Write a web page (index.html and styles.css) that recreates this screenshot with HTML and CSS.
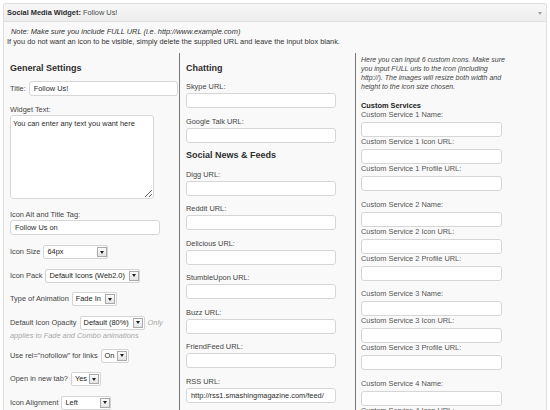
FILE: index.html
```html
<!DOCTYPE html>
<html lang="en">
<head>
<meta charset="utf-8">
<title>Social Media Widget</title>
<link rel="stylesheet" href="styles.css">
</head>
<body>
<div class="widget">
  <div class="widget-top">
    <h4 class="widget-title"><strong>Social Media Widget:</strong> Follow Us!</h4>
    <span class="widget-toggle"></span>
  </div>
  <div class="widget-inside">
    <div class="note">
      <p class="note-em"><em>Note: Make sure you include FULL URL (i.e. http://www.example.com)</em></p>
      <p>If you do not want an icon to be visible, simply delete the supplied URL and leave the input blox blank.</p>
    </div>
    <div class="columns">
      <div class="col col-general">
        <h3 class="col-title">General Settings</h3>
        <div class="row-title"><label class="row-title-label">Title:</label><input class="text text-fill" type="text" value="Follow Us!"></div>
        <label class="lbl lbl-widget-text">Widget Text:</label>
        <textarea class="textarea">You can enter any text you want here</textarea>
        <label class="lbl lbl-alt">Icon Alt and Title Tag:</label>
        <input class="text text-alt" type="text" value="Follow Us on">
        <div class="opt opt-first">Icon Size<span class="select w-size"><span class="select-val">64px</span><span class="select-btn"></span></span></div>
        <div class="opt">Icon Pack<span class="select w-pack"><span class="select-val">Default Icons (Web2.0)</span><span class="select-btn"></span></span></div>
        <div class="opt">Type of Animation<span class="select w-anim"><span class="select-val">Fade In</span><span class="select-btn"></span></span></div>
        <div class="opt opt-wrap">Default Icon Opacity<span class="select w-opacity"><span class="select-val">Default (80%)</span><span class="select-btn"></span></span><span class="hint">Only</span><span class="hint hint-line">applies to Fade and Combo animations</span></div>
        <div class="opt">Use rel="nofollow" for links<span class="select w-rel"><span class="select-val">On</span><span class="select-btn"></span></span></div>
        <div class="opt">Open in new tab?<span class="select w-tab"><span class="select-val">Yes</span><span class="select-btn"></span></span></div>
        <div class="opt">Icon Alignment<span class="select w-align"><span class="select-val">Left</span><span class="select-btn"></span></span></div>
      </div>

      <div class="col col-social">
        <h3 class="col-title">Chatting</h3>
        <div class="field"><label>Skype URL:</label><input class="text" type="text"></div>
        <div class="field"><label>Google Talk URL:</label><input class="text" type="text"></div>
        <h3 class="col-title col-title-2">Social News &amp; Feeds</h3>
        <div class="field"><label>Digg URL:</label><input class="text" type="text"></div>
        <div class="field"><label>Reddit URL:</label><input class="text" type="text"></div>
        <div class="field"><label>Delicious URL:</label><input class="text" type="text"></div>
        <div class="field"><label>StumbleUpon URL:</label><input class="text" type="text"></div>
        <div class="field"><label>Buzz URL:</label><input class="text" type="text"></div>
        <div class="field"><label>FriendFeed URL:</label><input class="text" type="text"></div>
        <div class="field"><label>RSS URL:</label><input class="text" type="text" value="http://rss1.smashingmagazine.com/feed/"></div>
      </div>

      <div class="col col-custom">
        <p class="intro">Here you can input 6 custom icons. Make sure you input FULL urls to the icon (including http://). The images will resize both width and height to the icon size chosen.</p>
        <h4 class="custom-title">Custom Services</h4>
        <div class="cgroup">
          <label>Custom Service 1 Name:</label><input class="text" type="text">
          <label>Custom Service 1 Icon URL:</label><input class="text" type="text">
          <label>Custom Service 1 Profile URL:</label><input class="text" type="text">
        </div>
        <div class="cgroup">
          <label>Custom Service 2 Name:</label><input class="text" type="text">
          <label>Custom Service 2 Icon URL:</label><input class="text" type="text">
          <label>Custom Service 2 Profile URL:</label><input class="text" type="text">
        </div>
        <div class="cgroup">
          <label>Custom Service 3 Name:</label><input class="text" type="text">
          <label>Custom Service 3 Icon URL:</label><input class="text" type="text">
          <label>Custom Service 3 Profile URL:</label><input class="text" type="text">
        </div>
        <div class="cgroup">
          <label>Custom Service 4 Name:</label><input class="text" type="text">
          <label>Custom Service 4 Icon URL:</label><input class="text" type="text">
          <label>Custom Service 4 Profile URL:</label><input class="text" type="text">
        </div>
      </div>
    </div>
  </div>
</div>
</body>
</html>
```

FILE: styles.css
```css
* { box-sizing: border-box; }

html, body {
  margin: 0;
  padding: 0;
  overflow: hidden;
}

body {
  width: 550px;
  height: 410px;
  background: #ffffff;
  font-family: "Liberation Sans", Arial, sans-serif;
  font-size: 7.4px;
  color: #333;
}

.widget {
  margin: 3px 3px 0 3px;
  border: 1px solid #dfdfdf;
  border-bottom: none;
  border-radius: 3px 3px 0 0;
  background: #f9f9f9;
}

.widget-top {
  display: flex;
  align-items: center;
  justify-content: space-between;
  height: 18px;
  padding: 1px 4px 0 3px;
  border-bottom: 1px solid #dfdfdf;
  border-radius: 3px 3px 0 0;
  background: linear-gradient(#f7f7f7, #ededed);
}

.widget-title {
  margin: 0;
  font-size: 7.4px;
  line-height: 14px;
  font-weight: normal;
  color: #4a4a4a;
}

.widget-title strong {
  color: #2a2a2a;
}

.widget-toggle {
  width: 0;
  height: 0;
  margin-top: 1px;
  border-left: 2.5px solid transparent;
  border-right: 2.5px solid transparent;
  border-top: 3px solid #a0a0a0;
}

.note {
  padding: 5px 3px 0 3px;
  line-height: 10px;
  color: #333;
}

.note p { margin: 0; }

.note-em { padding-left: 4px; }

.columns {
  display: grid;
  grid-template-columns: 175px 176px 1fr;
  margin-top: 6px;
  min-height: 370px;
}

.col-general { padding: 10px 1px 0 6px; }

.col-social {
  padding: 10px 0 0 6px;
  border-left: 1px solid #7a7a7a;
}

.col-custom {
  padding: 2px 0 0 5px;
  border-left: 1px solid #7a7a7a;
}

.col-title {
  margin: 0 0 7px;
  font-size: 9px;
  line-height: 11px;
  font-weight: bold;
  color: #2e2e2e;
}

.col-title-2 { margin: 1.5px 0 7.5px; }

/* form controls */
.text {
  display: block;
  height: 15px;
  margin: 0;
  padding: 0 4px;
  border: 1px solid #d6d6d6;
  border-radius: 3px;
  background: #fff;
  font: inherit;
  color: #2a2a2a;
  outline: none;
}

.textarea {
  display: block;
  width: 144px;
  height: 84px;
  margin: 0;
  padding: 3px 2px;
  border: 1px solid #d9d9d9;
  border-radius: 3px;
  background: #fff;
  font: inherit;
  line-height: 10px;
  color: #2a2a2a;
  outline: none;
}

.lbl {
  display: block;
  line-height: 11px;
  color: #444;
}

.row-title {
  display: flex;
  align-items: center;
  margin-top: 2px;
}

.row-title-label {
  margin-right: 3px;
  color: #444;
}

.text-fill {
  flex: 1;
  min-width: 0;
}

.lbl-widget-text { margin-top: 7.5px; }

.lbl-alt { margin-top: 10.5px; }

.text-alt { width: 150px; }

.opt {
  line-height: 14px;
  margin-bottom: 9.5px;
  color: #444;
}

.opt-first { margin-top: 10px; }

.opt-wrap {
  margin-bottom: 7px;
}

.select {
  display: inline-flex;
  align-items: center;
  vertical-align: top;
  height: 14px;
  margin: 0 3px;
  padding-left: 3px;
  border: 1px solid #d4d4d4;
  border-radius: 2px;
  background: #fff;
  line-height: 12px;
}

.select-val {
  flex: 1;
  white-space: nowrap;
  color: #222;
}

.select-btn {
  display: flex;
  align-items: center;
  justify-content: center;
  width: 10px;
  height: 10px;
  margin-right: 0.5px;
  border: 1px solid #a9a9a9;
  background: linear-gradient(#fbfbfb, #e4e4e4);
}

.select-btn::after {
  content: "";
  width: 0;
  height: 0;
  border-left: 2.5px solid transparent;
  border-right: 2.5px solid transparent;
  border-top: 3px solid #222;
}

.w-size { width: 65px; }
.w-pack { width: 95px; }
.w-anim { width: 45px; }
.w-opacity { width: 65px; }
.w-rel { width: 28px; }
.w-tab { width: 30px; }
.w-align { width: 50px; }

.hint {
  font-style: italic;
  color: #a8a8a8;
}

.hint-line {
  display: block;
  line-height: 12px;
}

/* social column */
.field { margin-bottom: 7.5px; }

.field label {
  display: block;
  line-height: 12px;
  color: #444;
}

.field .text { width: 150px; }

/* custom column */
.intro {
  margin: 0;
  width: 147px;
  font-size: 7px;
  line-height: 9.1px;
  font-style: italic;
  color: #444;
}

.custom-title {
  margin: 9.8px 0 0;
  font-size: 7.4px;
  line-height: 9px;
  font-weight: bold;
  color: #222;
}

.cgroup { margin-bottom: 8.5px; }

.cgroup label {
  display: block;
  line-height: 10.5px;
  color: #555;
}

.cgroup .text {
  width: 141px;
  margin-top: 1.5px;
}
```
